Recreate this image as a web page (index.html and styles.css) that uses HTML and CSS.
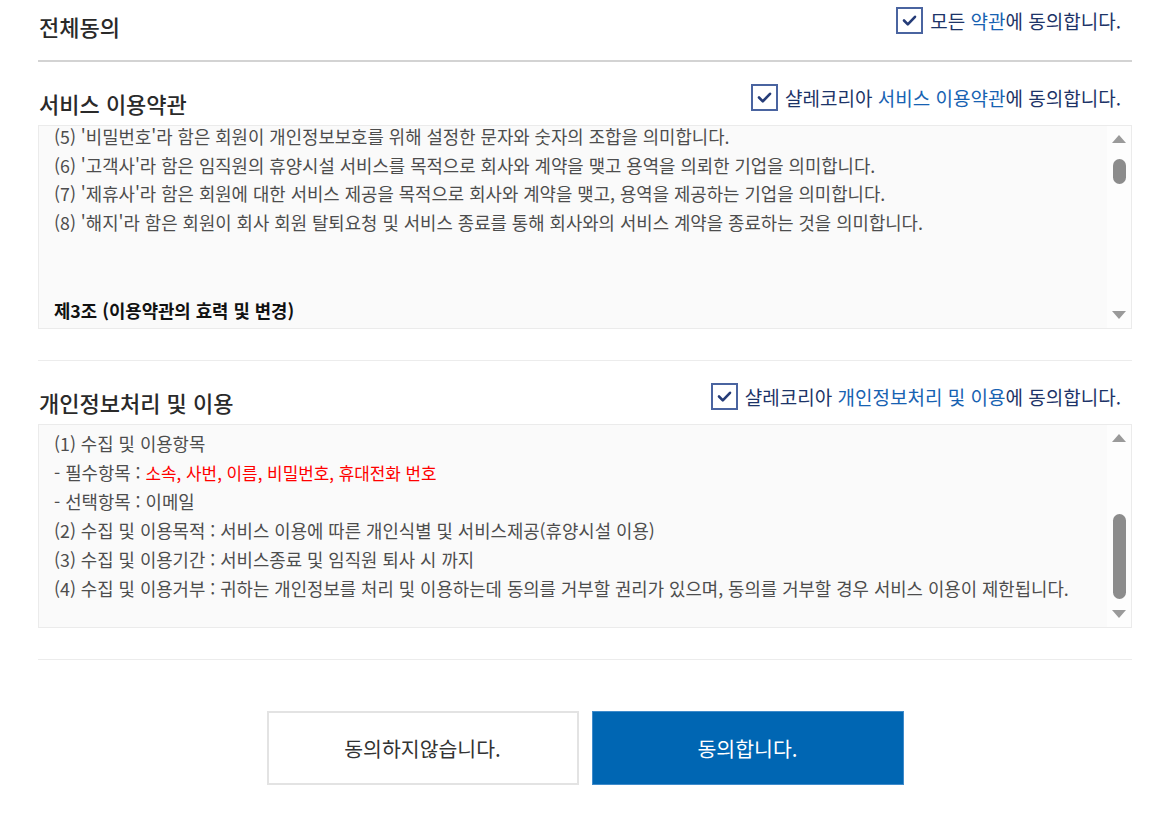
FILE: index.html
```html
<!DOCTYPE html>
<html lang="ko">
<head>
    <meta charset="UTF-8">
    <meta name="viewport" content="width=device-width, initial-scale=1.0">
    <title>약관 동의</title>
    <link rel="stylesheet" href="styles.css">
</head>
<body>
    <div class="terms">
        <!-- 전체동의 -->
        <div class="section all">
            <div class="section-head">
                <div class="title">전체동의</div>
                <label class="agree">
                    <span class="check"><svg width="23" height="23" viewBox="0 0 23 23"><path d="M6 11.5 L9.8 15.3 L17 7.8" fill="none" stroke="#253c78" stroke-width="2.6" stroke-linecap="round" stroke-linejoin="round"/></svg></span>
                    <span>모든 <em>약관</em>에 동의합니다.</span>
                </label>
            </div>
        </div>

        <!-- 서비스 이용약관 -->
        <div class="section">
            <div class="section-head">
                <div class="title">서비스 이용약관</div>
                <label class="agree">
                    <span class="check"><svg width="23" height="23" viewBox="0 0 23 23"><path d="M6 11.5 L9.8 15.3 L17 7.8" fill="none" stroke="#253c78" stroke-width="2.6" stroke-linecap="round" stroke-linejoin="round"/></svg></span>
                    <span>샬레코리아 <em>서비스 이용약관</em>에 동의합니다.</span>
                </label>
            </div>
            <div class="scroll-box">
                <div class="scroll-text">
                    <div class="scroll-inner first">
                        <p>(5) '비밀번호'라 함은 회원이 개인정보보호를 위해 설정한 문자와 숫자의 조합을 의미합니다.</p>
                        <p>(6) '고객사'라 함은 임직원의 휴양시설 서비스를 목적으로 회사와 계약을 맺고 용역을 의뢰한 기업을 의미합니다.</p>
                        <p>(7) '제휴사'라 함은 회원에 대한 서비스 제공을 목적으로 회사와 계약을 맺고, 용역을 제공하는 기업을 의미합니다.</p>
                        <p>(8) '해지'라 함은 회원이 회사 회원 탈퇴요청 및 서비스 종료를 통해 회사와의 서비스 계약을 종료하는 것을 의미합니다.</p>
                        <p class="article">제3조 (이용약관의 효력 및 변경)</p>
                    </div>
                </div>
                <div class="scrollbar">
                    <span class="arrow up"></span>
                    <div class="track"><span class="thumb" style="margin-top: 8px; height: 25px;"></span></div>
                    <span class="arrow down"></span>
                </div>
            </div>
        </div>

        <!-- 개인정보처리 및 이용 -->
        <div class="section">
            <div class="section-head">
                <div class="title">개인정보처리 및 이용</div>
                <label class="agree">
                    <span class="check"><svg width="23" height="23" viewBox="0 0 23 23"><path d="M6 11.5 L9.8 15.3 L17 7.8" fill="none" stroke="#253c78" stroke-width="2.6" stroke-linecap="round" stroke-linejoin="round"/></svg></span>
                    <span>샬레코리아 <em>개인정보처리 및 이용</em>에 동의합니다.</span>
                </label>
            </div>
            <div class="scroll-box">
                <div class="scroll-text">
                    <div class="scroll-inner">
                        <p>(1) 수집 및 이용항목</p>
                        <p>- 필수항목 : <span class="required">소속, 사번, 이름, 비밀번호, 휴대전화 번호</span></p>
                        <p>- 선택항목 : 이메일</p>
                        <p>(2) 수집 및 이용목적 : 서비스 이용에 따른 개인식별 및 서비스제공(휴양시설 이용)</p>
                        <p>(3) 수집 및 이용기간 : 서비스종료 및 임직원 퇴사 시 까지</p>
                        <p>(4) 수집 및 이용거부 : 귀하는 개인정보를 처리 및 이용하는데 동의를 거부할 권리가 있으며, 동의를 거부할 경우 서비스 이용이 제한됩니다.</p>
                    </div>
                </div>
                <div class="scrollbar">
                    <span class="arrow up"></span>
                    <div class="track"><span class="thumb" style="margin-top: 64px; height: 85px;"></span></div>
                    <span class="arrow down"></span>
                </div>
            </div>
        </div>

        <div class="buttons">
            <button class="btn btn-cancel">동의하지않습니다.</button>
            <button class="btn btn-ok">동의합니다.</button>
        </div>
    </div>
</body>
</html>
```

FILE: styles.css
```css
body {
    margin: 0;
    font-family: "Noto Sans CJK KR", "Noto Sans", sans-serif;
    background: #ffffff;
    color: #4a4a4a;
}
.terms {
    padding: 0 38px;
}
.section {
    padding: 22px 0 31px;
    border-bottom: 1px solid #ececec;
}
.section.all {
    padding: 7px 0 18px;
    height: 35px;
    border-bottom: 2px solid #d3d3d3;
}
.section-head {
    display: flex;
    justify-content: space-between;
    align-items: flex-start;
    height: 34px;
    margin-bottom: 7px;
}
.title {
    margin-top: 4px;
    margin-left: 1px;
    font-size: 22px;
    font-weight: 500;
    line-height: 30px;
    color: #2a2a2a;
}
.agree {
    display: flex;
    align-items: center;
    gap: 7px;
    margin-right: 11px;
    font-size: 19px;
    line-height: 27px;
    color: #1d3468;
    cursor: pointer;
}
.agree em {
    font-style: normal;
    color: #1762b2;
}
.check {
    display: flex;
    align-items: center;
    justify-content: center;
    width: 23px;
    height: 23px;
    border: 2px solid #4a64a0;
    background: #fff;
}
.scroll-box {
    display: flex;
    height: 204px;
    box-sizing: border-box;
    background: #fafafa;
    border: 1px solid #ebebeb;
}
.scroll-text {
    flex: 1;
    overflow: hidden;
    padding: 0 15px;
}
.scroll-inner {
    padding-top: 4px;
    font-size: 17.8px;
    line-height: 28.7px;
    color: #4d4d4d;
}
.scroll-inner.first {
    margin-top: -4px;
    padding-top: 0;
}
.scroll-inner p {
    margin: 0;
}
.scroll-inner .article {
    margin-top: 59px;
    font-weight: 700;
    color: #111;
}
.required {
    font-size: 16.9px;
    color: #ff0000;
}
.scrollbar {
    width: 24px;
    display: flex;
    flex-direction: column;
    align-items: center;
    background: #fdfdfd;
    padding: 9px 0;
    box-sizing: border-box;
}
.arrow {
    width: 0;
    height: 0;
    border-left: 7px solid transparent;
    border-right: 7px solid transparent;
}
.arrow.up {
    border-bottom: 8px solid #9a9a9a;
}
.arrow.down {
    border-top: 8px solid #9a9a9a;
}
.track {
    flex: 1;
    width: 13px;
    padding-top: 8px;
}
.thumb {
    display: block;
    width: 13px;
    border-radius: 7px;
    background: #8c8c8c;
}
.buttons {
    display: flex;
    justify-content: center;
    gap: 13px;
    padding-top: 51px;
}
.btn {
    width: 312px;
    height: 74px;
    font-family: "Noto Sans CJK KR", "Noto Sans", sans-serif;
    font-size: 20.5px;
    cursor: pointer;
}
.btn-cancel {
    background: #fff;
    color: #333;
    border: 2px solid #e3e3e3;
}
.btn-ok {
    background: #0066b3;
    color: #fff;
    border: 1px solid #3f8bcb;
}
```
